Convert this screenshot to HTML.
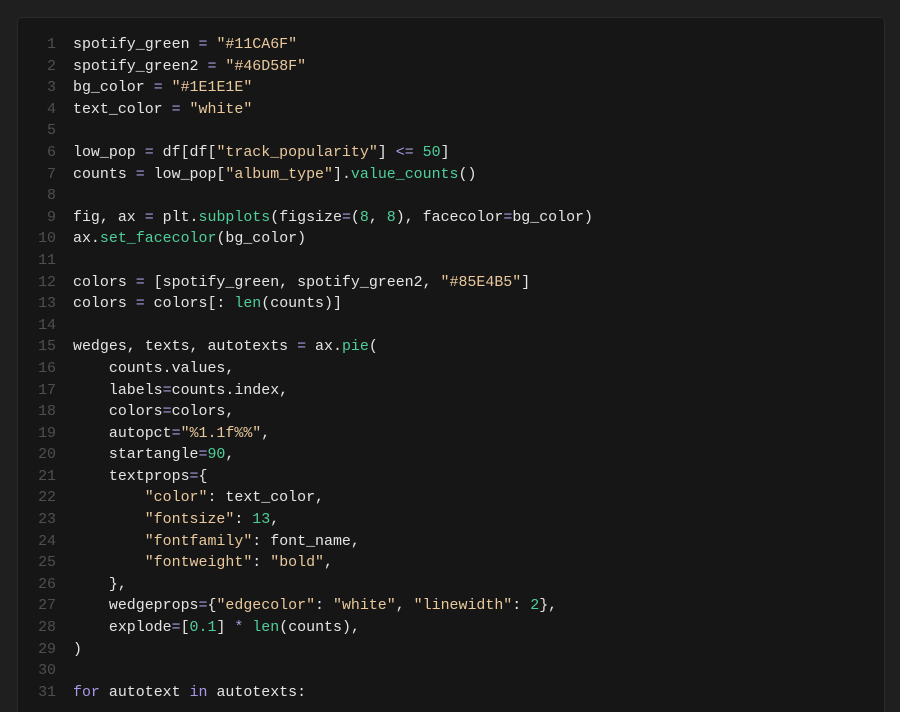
<!DOCTYPE html>
<html><head><meta charset="utf-8"><style>
html,body{margin:0;padding:0;background:#1f1f1f;width:900px;height:711px;overflow:hidden}
.panel{position:absolute;left:17px;top:17px;width:866px;height:694px;background:#161616;border:1px solid #2a2a2a;border-bottom:none;border-radius:5px 5px 0 0;overflow:hidden}
pre{margin:0;position:absolute;left:0;top:17px;font-family:"Liberation Mono",monospace;font-size:14.95px;line-height:21.6px;color:#e4e4e4}
.ln{display:inline-block;width:38px;text-align:right;color:#4f4f4f;margin-right:17px}
.s{color:#e9c89c}.n{color:#4fcf9a}.f{color:#4fcf9a}.k{color:#ab95e6}.o{color:#a99be0}
</style></head><body><div class="panel"><pre>
<span class="ln">1</span>spotify_green <span class="o">=</span> <span class="s">"#11CA6F"</span>
<span class="ln">2</span>spotify_green2 <span class="o">=</span> <span class="s">"#46D58F"</span>
<span class="ln">3</span>bg_color <span class="o">=</span> <span class="s">"#1E1E1E"</span>
<span class="ln">4</span>text_color <span class="o">=</span> <span class="s">"white"</span>
<span class="ln">5</span>
<span class="ln">6</span>low_pop <span class="o">=</span> df[df[<span class="s">"track_popularity"</span>] <span class="o">&lt;=</span> <span class="n">50</span>]
<span class="ln">7</span>counts <span class="o">=</span> low_pop[<span class="s">"album_type"</span>].<span class="f">value_counts</span>()
<span class="ln">8</span>
<span class="ln">9</span>fig, ax <span class="o">=</span> plt.<span class="f">subplots</span>(figsize<span class="o">=</span>(<span class="n">8</span>, <span class="n">8</span>), facecolor<span class="o">=</span>bg_color)
<span class="ln">10</span>ax.<span class="f">set_facecolor</span>(bg_color)
<span class="ln">11</span>
<span class="ln">12</span>colors <span class="o">=</span> [spotify_green, spotify_green2, <span class="s">"#85E4B5"</span>]
<span class="ln">13</span>colors <span class="o">=</span> colors[: <span class="f">len</span>(counts)]
<span class="ln">14</span>
<span class="ln">15</span>wedges, texts, autotexts <span class="o">=</span> ax.<span class="f">pie</span>(
<span class="ln">16</span>    counts.values,
<span class="ln">17</span>    labels<span class="o">=</span>counts.index,
<span class="ln">18</span>    colors<span class="o">=</span>colors,
<span class="ln">19</span>    autopct<span class="o">=</span><span class="s">"%1.1f%%"</span>,
<span class="ln">20</span>    startangle<span class="o">=</span><span class="n">90</span>,
<span class="ln">21</span>    textprops<span class="o">=</span>{
<span class="ln">22</span>        <span class="s">"color"</span>: text_color,
<span class="ln">23</span>        <span class="s">"fontsize"</span>: <span class="n">13</span>,
<span class="ln">24</span>        <span class="s">"fontfamily"</span>: font_name,
<span class="ln">25</span>        <span class="s">"fontweight"</span>: <span class="s">"bold"</span>,
<span class="ln">26</span>    },
<span class="ln">27</span>    wedgeprops<span class="o">=</span>{<span class="s">"edgecolor"</span>: <span class="s">"white"</span>, <span class="s">"linewidth"</span>: <span class="n">2</span>},
<span class="ln">28</span>    explode<span class="o">=</span>[<span class="n">0.1</span>] <span class="o">*</span> <span class="f">len</span>(counts),
<span class="ln">29</span>)
<span class="ln">30</span>
<span class="ln">31</span><span class="k">for</span> autotext <span class="k">in</span> autotexts:
</pre></div></body></html>
